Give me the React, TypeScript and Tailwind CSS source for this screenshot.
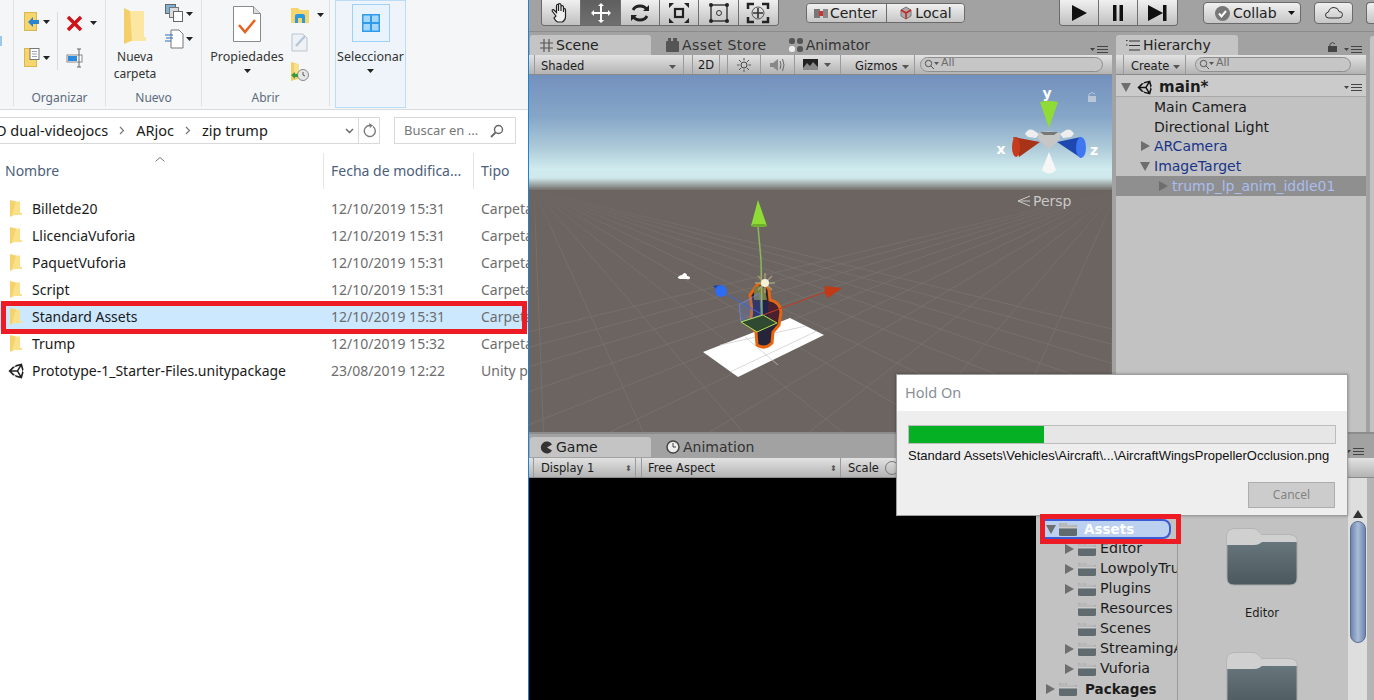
import React from "react";
import { FaUnity } from "react-icons/fa";

const seg = "font-['Noto_Sans','Open_Sans',sans-serif]";
const dj = "font-['DejaVu_Sans',sans-serif]";

const Caret = ({ c = "#222" }: { c?: string }) => (
  <svg width="7" height="4" viewBox="0 0 7 4" className="shrink-0"><path d="M0 0h7L3.5 4z" fill={c} /></svg>
);
const Arrow = ({ open }: { open?: boolean }) => (
  <svg width="10" height="10" viewBox="0 0 10 10" className="shrink-0">
    {open ? <path d="M0 1h10L5 10z" fill="#6e6e6e" /> : <path d="M1 0l9 5-9 5z" fill="#6e6e6e" />}
  </svg>
);
const MenuIcon = () => (
  <svg width="20" height="7" viewBox="0 0 20 7"><path d="M0 2h5L2.5 5z" fill="#444" /><path d="M7 0.5h11M7 3.5h11M7 6.5h11" stroke="#444" strokeWidth="1.2" /></svg>
);
const WinFolder = () => (
  <svg width="13" height="19" viewBox="0 0 13 19" className="shrink-0">
    <path d="M1 1l6 1.5V15L1 18z" fill="#f5d36c" />
    <path d="M7 2.500h4V14h2v2H3z" fill="#fbe08a" />
  </svg>
);
const TreeFolder = () => (
  <svg width="18" height="15" viewBox="0 0 18 15" className="shrink-0">
    <path d="M0 3q0-2 2-2h5l1 2h8q2 0 2 2v8q0 1-2 1H2q-2 0-2-1z" fill="#5f6b6f" />
    <path d="M0 3q0-2 2-2h5l1 2h8q2 0 2 2v1H0z" fill="#b9b9b9" />
    <path d="M0 6h18" stroke="#eee" strokeWidth="0.7" />
  </svg>
);
const BigFolder = () => (
  <svg width="72" height="58" viewBox="0 0 72 58" className="shrink-0">
    <defs>
      <linearGradient id="bf" x1="0" y1="0" x2="0" y2="1"><stop offset="0" stopColor="#6f7f85" /><stop offset="1" stopColor="#4b585d" /></linearGradient>
    </defs>
    <path d="M1 8q0-7 7-7h20q3 0 5 3l3 3h28q7 0 7 7v36q0 7-7 7H8q-7 0-7-7z" fill="url(#bf)" stroke="#a8a8a8" />
    <path d="M1 8q0-7 7-7h20q3 0 5 3l3 3h28q7 0 7 7H36l-3 2q-2 1-5 1H1z" fill="#d0d0d0" />
  </svg>
);

const Gradient = "bg-[linear-gradient(#e2e2e2,#b3b3b3)]";

const ToolBtn = ({ active, children, w = "w-[40px]" }: { active?: boolean; children: React.ReactNode; w?: string }) => (
  <div className={`${w} h-full flex items-center justify-center border-r border-[#6f6f6f] last:border-r-0 ${active ? "bg-[linear-gradient(#5f5f5f,#6f6f6f)]" : "bg-[linear-gradient(#f0f0f0,#c0c0c0)]"}`}>
    {children}
  </div>
);

const Tool = ({ children, w = 24, h = 22 }: { children: React.ReactNode; w?: number; h?: number }) => (
  <svg width={w} height={h} viewBox="0 0 24 22" fill="none">{children}</svg>
);

const SearchField = ({ w }: { w: string }) => (
  <div className={`${w} h-[15px] rounded-full border border-[#8f8f8f] bg-[#c6c6c6] flex items-center pl-[3px] gap-[1px] text-[11px] text-[#6c6c6c]`}>
    <svg width="16" height="11" viewBox="0 0 16 11" fill="none"><circle cx="4.500" cy="4.500" r="3.200" stroke="#555" /><path d="M7 7l3 3" stroke="#555" /><path d="M10 3h5l-2.500 3z" fill="#555" /></svg>
    <span className="-mt-[2px]">All</span>
  </div>
);

const Sep = () => <div className="w-px h-full bg-[#9a9a9a] shrink-0" />;

const explorerRows = [
  { n: "Billetde20", d: "12/10/2019 15:31", t: "Carpeta" },
  { n: "LlicenciaVuforia", d: "12/10/2019 15:31", t: "Carpeta" },
  { n: "PaquetVuforia", d: "12/10/2019 15:31", t: "Carpeta" },
  { n: "Script", d: "12/10/2019 15:31", t: "Carpeta" },
  { n: "Standard Assets", d: "12/10/2019 15:31", t: "Carpeta", sel: true },
  { n: "Trump", d: "12/10/2019 15:32", t: "Carpeta" },
  { n: "Prototype-1_Starter-Files.unitypackage", d: "23/08/2019 12:22", t: "Unity p", unity: true },
];

function Ribbon() {
  return (
    <div className={`h-[110px] bg-[#f5f6f7] border-b border-[#dadbdc] flex text-[12px] text-[#3b3b3b] shrink-0 ${seg}`}>
      <div className="w-[14px] h-[106px] border-r border-[#dfe0e1] pt-[36px]"><div className="w-[2px] h-[10px] bg-[#9cc8ee]" /></div>
      {/* Organizar */}
      <div className="w-[92px] h-[106px] border-r border-[#dfe0e1] flex flex-col items-center">
        <div className="flex-1 flex pt-[12px] pl-[10px] w-full">
          <div className="w-[34px] flex flex-col gap-[16px] border-r border-[#dcdcdc] h-[58px]">
            <div className="flex items-center gap-[3px] h-[20px]">
              <svg width="16" height="20" viewBox="0 0 16 20"><rect x="0.500" y="0.500" width="12" height="18" fill="#f6d56f" stroke="#d9b850" /><path d="M15 8H9V5l-5 5 5 5v-3h6z" fill="#2a84d2" /></svg>
              <Caret />
            </div>
            <div className="flex items-center gap-[3px] h-[20px]">
              <svg width="16" height="20" viewBox="0 0 16 20"><rect x="0.500" y="0.500" width="12" height="18" fill="#f6d56f" stroke="#d9b850" /><rect x="6" y="0.500" width="9" height="11" fill="#fff" stroke="#777" /><path d="M8 3.500h5M8 6h5M8 8.500h5" stroke="#88a" strokeWidth="0.800" /></svg>
              <Caret />
            </div>
          </div>
          <div className="flex flex-col gap-[14px] pl-[8px]">
            <div className="flex items-center gap-[7px] h-[22px]">
              <svg width="17" height="17" viewBox="0 0 17 17"><path d="M2 2l13 13M15 2L2 15" stroke="#d0121b" strokeWidth="3.500" /></svg>
              <Caret />
            </div>
            <svg width="19" height="20" viewBox="0 0 19 20" fill="none"><rect x="1" y="7" width="15" height="7" fill="#fff" stroke="#888" /><rect x="2" y="8" width="9" height="5" fill="#2a8ae0" /><path d="M13 1v18M11 1h4M11 19h4" stroke="#666" /></svg>
          </div>
        </div>
        <div className="h-[16px] leading-[16px] text-[#5b6b7d]">Organizar</div>
      </div>
      {/* Nuevo */}
      <div className="w-[96px] h-[106px] border-r border-[#dfe0e1] flex flex-col">
        <div className="flex-1 flex pl-[6px]">
          <div className="w-[46px] flex flex-col pt-[8px] items-center">
            <svg width="24" height="36" viewBox="0 0 24 36"><path d="M1 0l12 6v25L1 36z" fill="#f3cf6a" /><path d="M7 3h14v26h2v4H9z" fill="#fbe7a1" /></svg>
            <div className="text-center leading-[17px] mt-[4px] whitespace-nowrap text-[#333]">Nueva<br />carpeta</div>
          </div>
          <div className="flex flex-col pt-[4px] gap-[6px] pl-[7px]">
            <div className="flex items-center gap-[2px]">
              <svg width="19" height="19" viewBox="0 0 19 19" fill="none"><rect x="0.500" y="0.500" width="10" height="9" fill="#7fb3d8" stroke="#666" /><rect x="4.500" y="3.500" width="9" height="10" fill="#ddd" stroke="#777" /><rect x="8.500" y="7.500" width="9" height="10" fill="#fff" stroke="#666" /></svg>
              <Caret />
            </div>
            <div className="flex items-center gap-[2px]">
              <svg width="19" height="20" viewBox="0 0 19 20" fill="none"><path d="M6 1h8l4 4v14H6z" fill="#fff" stroke="#777" /><path d="M0 6h8M1 9h7M0 12h6" stroke="#2a6fc0" /></svg>
              <Caret />
            </div>
          </div>
        </div>
        <div className="h-[16px] leading-[16px] text-center text-[#5b6b7d]">Nuevo</div>
      </div>
      {/* Abrir */}
      <div className="w-[128px] h-[106px] border-r border-[#dfe0e1] flex flex-col">
        <div className="flex-1 flex pl-[7px]">
          <div className="w-[76px] flex flex-col items-center pt-[6px]">
            <svg width="28" height="36" viewBox="0 0 28 36" fill="none"><path d="M0.500 0.500h20l7 7v28h-27z" fill="#fff" stroke="#8a8a8a" /><path d="M20.500 0.500v7h7" stroke="#8a8a8a" fill="#ddd" /><path d="M6 19l6 7 10-12" stroke="#e8611f" strokeWidth="2.500" /></svg>
            <div className="mt-[6px] text-[#333] text-[12.500px] leading-[17px]">Propiedades</div>
            <div className="mt-[4px]"><Caret /></div>
          </div>
          <div className="flex flex-col pl-[6px] pt-[7px] gap-[10px]">
            <div className="flex items-center gap-[8px]">
              <svg width="18" height="16" viewBox="0 0 18 16"><path d="M0 1h7l2 2h9v13H0z" fill="#f6d56f" /><path d="M4 16V9q0-2 2-2h6q2 0 2 2v7h-3v-5H7v5z" fill="#2a9ae0" /></svg>
              <Caret />
            </div>
            <svg width="17" height="19" viewBox="0 0 17 19" fill="none"><path d="M1 1h11l4 4v13H1z" fill="#eef2f6" stroke="#b9c4cf" /><path d="M5 13l9-10" stroke="#b8c7d8" strokeWidth="2.500" /></svg>
            <svg width="18" height="19" viewBox="0 0 18 19"><path d="M0 0l7 2v15l-7 2z" fill="#f3cf6a" /><path d="M3 2h5v9H3z" fill="#fbe08a" /><circle cx="12" cy="13" r="5.500" fill="#e6e6e6" stroke="#888" /><path d="M12 10v3l2 1" stroke="#555" fill="none" /><path d="M0 13l4-3v2h3v3H4v2z" fill="#3c9a3c" /></svg>
          </div>
        </div>
        <div className="h-[16px] leading-[16px] text-center text-[#5b6b7d]">Abrir</div>
      </div>
      <div className="w-[5px]" />
      {/* Seleccionar */}
      <div className="w-[71px] h-[108px] bg-[#eef4f9] border border-[#bbdcf7] flex flex-col items-center pt-[3px]">
        <div className="w-[38px] h-[38px] border border-[#9fd0f5] bg-[#e8f3fb] flex items-center justify-center">
          <svg width="18" height="18" viewBox="0 0 18 18"><rect width="18" height="18" fill="#2f9bea" /><path d="M1.500 1.500H8V8H1.500zM10 1.500h6.500V8H10zM1.500 10H8v6.500H1.500zM10 10h6.500v6.500H10z" fill="#a5d7fb" /></svg>
        </div>
        <div className="mt-[6px] text-[#333] text-[12.500px] leading-[17px] whitespace-nowrap">Seleccionar</div>
        <div className="mt-[4px]"><Caret /></div>
      </div>
    </div>
  );
}

const Chevron = () => (
  <svg width="6" height="9" viewBox="0 0 6 9" className="mx-[11px] shrink-0" fill="none"><path d="M1 1l3.500 3.500L1 8" stroke="#777" strokeWidth="1.200" /></svg>
);

function Explorer() {
  return (
    <div className={`w-[529px] h-full bg-white border-r border-[#1883d7] flex flex-col shrink-0 overflow-hidden ${seg}`}>
      <Ribbon />
      <div className="h-[40px] flex items-start pt-[7px] shrink-0 text-[14.500px] text-[#1a1a1a]">
        <div className="w-[380px] h-[27px] border border-l-0 border-[#d9d9d9] flex items-center overflow-hidden">
          <div className="w-[350px] flex items-center overflow-hidden whitespace-nowrap">
            <span className="-ml-[4px]">D dual-videojocs</span>
            <Chevron />
            <span>ARjoc</span>
            <Chevron />
            <span>zip trump</span>
          </div>
          <svg width="9" height="6" viewBox="0 0 9 6" fill="none" className="ml-[-5px] mr-[4px] shrink-0"><path d="M1 1l3.500 3.500L8 1" stroke="#666" strokeWidth="1.400" /></svg>
          <div className="w-px h-full bg-[#d9d9d9]" />
          <svg width="14" height="15" viewBox="0 0 14 15" fill="none" className="ml-[4px] shrink-0"><path d="M10 3.500a5.500 5.500 0 1 1-3-1" stroke="#7a7a7a" strokeWidth="1.400" /><path d="M6 0l4 2.500L7 5z" fill="#7a7a7a" /></svg>
        </div>
        <div className="ml-[14px] w-[122px] h-[27px] border border-[#d9d9d9] flex items-center pl-[9px] justify-between pr-[11px] text-[#777] text-[13px]">
          <span>Buscar en ...</span>
          <svg width="14" height="14" viewBox="0 0 14 14" fill="none"><circle cx="8.500" cy="5.500" r="4" stroke="#666" strokeWidth="1.400" /><path d="M5.500 8.500L1 13" stroke="#666" strokeWidth="1.800" /></svg>
        </div>
      </div>
      <div className="h-[36px] flex items-stretch text-[14px] text-[#4c607a] shrink-0 mt-[3px]">
        <div className="relative w-[324px] border-r border-[#e5e5e5] pl-[5px] pb-[2px] flex items-center">
          Nombre
          <svg width="10" height="5" viewBox="0 0 10 5" fill="none" className="absolute left-[155px] top-[4px]"><path d="M0.500 4.500L5 0.500l4.500 4" stroke="#777" /></svg>
        </div>
        <div className="w-[150px] border-r border-[#e5e5e5] pl-[7px] pb-[2px] flex items-center whitespace-nowrap overflow-hidden">Fecha de modifica...</div>
        <div className="pl-[7px] pb-[2px] flex items-center">Tipo</div>
      </div>
      <div className="pt-[6px] text-[14px]">
        {explorerRows.map((r) => (
          <div key={r.n} className={`h-[27px] flex items-center whitespace-nowrap overflow-hidden ${r.sel ? "bg-[#cce8ff]" : ""}`}>
            <div className="w-[331px] flex items-center shrink-0">
              <div className="w-[32px] flex shrink-0 pl-[8px]">
                {r.unity ? <FaUnity className="text-[#222] text-[18px] shrink-0" /> : <span className="pl-[1px]"><WinFolder /></span>}
              </div>
              <span className="text-[#1a1a1a]">{r.n}</span>
            </div>
            <div className="w-[150px] shrink-0 text-[#6d6d6d]">{r.d}</div>
            <div className="text-[#6d6d6d]">{r.t}</div>
          </div>
        ))}
      </div>
    </div>
  );
}

function TopBar() {
  return (
    <div className={`h-[32px] shrink-0 border-b border-[#8c8c8c] flex text-[#222] ${dj} text-[13px]`}>
      <div className="ml-[12px] w-[238px] h-[26px] rounded-b-[4px] border border-t-0 border-[#6a6a6a] flex overflow-hidden">
        <ToolBtn>
          <Tool><path d="M7 14L3.500 9.500q-1-2 1-2l3 3V4q0-2 2-1.500V9 2q2-1 2.500 1v6-5q2-1 2.500 1v5-3q2-1 2 1v7q0 3-3 5h-5q-2-1-3.500-4z" stroke="#222" fill="#efefef" strokeWidth="1.200" /></Tool>
        </ToolBtn>
        <ToolBtn active>
          <Tool><path d="M12 1l3 3h-2v6h6V8l3 3-3 3v-2h-6v6h2l-3 3-3-3h2v-6H5v2l-3-3 3-3v2h6V4H9z" fill="#fff" /></Tool>
        </ToolBtn>
        <ToolBtn>
          <Tool><path d="M19 8q-2-4-7-4t-7 4M5 14q2 4 7 4t7-4" stroke="#222" strokeWidth="2.800" /><path d="M21 3v6h-6zM3 19v-6h6z" fill="#222" /></Tool>
        </ToolBtn>
        <ToolBtn>
          <Tool><rect x="8" y="7" width="8" height="8" stroke="#222" strokeWidth="2.200" /><path d="M2 1h5L2 6zM22 1h-5l5 5zM2 21h5l-5-5zM22 21h-5l5-5z" fill="#222" /></Tool>
        </ToolBtn>
        <ToolBtn>
          <Tool><rect x="4" y="3" width="16" height="16" stroke="#333" strokeWidth="1.400" /><circle cx="12" cy="11" r="2.500" stroke="#333" /><circle cx="4" cy="3" r="2" fill="#222" /><circle cx="20" cy="3" r="2" fill="#222" /><circle cx="4" cy="19" r="2" fill="#222" /><circle cx="20" cy="19" r="2" fill="#222" /></Tool>
        </ToolBtn>
        <ToolBtn>
          <Tool><path d="M2 7V2h6M16 2h6v5M22 15v5h-6M8 20H2v-5" stroke="#222" strokeWidth="2.500" /><path d="M12 6v10M7 11h10" stroke="#333" strokeWidth="1.600" /><circle cx="12" cy="11" r="6" stroke="#555" /></Tool>
        </ToolBtn>
      </div>
      <div className="ml-[27px] mt-[3px] w-[159px] h-[20px] rounded-[4px] border border-[#6a6a6a] flex overflow-hidden text-[14px]">
        <div className="w-[80px] border-r border-[#6a6a6a] bg-[linear-gradient(#f0f0f0,#c6c6c6)] flex items-center justify-center gap-[2px] pr-[2px]">
          <svg width="14" height="9" viewBox="0 0 14 9"><rect width="6" height="9" fill="#777" /><rect x="5" y="2" width="4" height="5" fill="#c33" /><rect x="9" width="5" height="9" fill="#888" /></svg>
          <span>Center</span>
        </div>
        <div className="flex-1 bg-[linear-gradient(#f0f0f0,#c6c6c6)] flex items-center justify-center gap-[2px]">
          <svg width="14" height="14" viewBox="0 0 14 14"><path d="M7 1l5 3v6l-5 3-5-3V4z" fill="#aaa" stroke="#777" /><path d="M7 7v6M7 7L2 4M7 7l5-3" stroke="#c22" strokeWidth="1.500" /></svg>
          <span>Local</span>
        </div>
      </div>
      <div className="ml-[94px] w-[119px] h-[26px] rounded-b-[4px] border border-t-0 border-[#6a6a6a] flex overflow-hidden">
        <ToolBtn><svg width="16" height="16" viewBox="0 0 16 16"><path d="M1 0l15 8-15 8z" fill="#111" /></svg></ToolBtn>
        <ToolBtn><svg width="12" height="16" viewBox="0 0 12 16"><path d="M1 0h3.500v16H1zM7.500 0H11v16H7.500z" fill="#111" /></svg></ToolBtn>
        <ToolBtn><svg width="19" height="16" viewBox="0 0 19 16"><path d="M0 0l15 8-15 8zM15 0h3.500v16H15z" fill="#111" /></svg></ToolBtn>
      </div>
      <div className="ml-[25px] mt-[2px] w-[98px] h-[22px] rounded-[4px] border border-[#6a6a6a] bg-[linear-gradient(#f0f0f0,#c6c6c6)] flex items-center pl-[11px] gap-[3px] text-[14px]">
        <svg width="15" height="15" viewBox="0 0 15 15"><circle cx="7.500" cy="7.500" r="7.500" fill="#777" /><path d="M4 7.500l2.500 3L11 5" stroke="#fff" strokeWidth="2" fill="none" /></svg>
        <span>Collab</span>
        <span className="ml-[8px]"><Caret c="#111" /></span>
      </div>
      <div className="ml-[13px] mt-[2px] w-[39px] h-[22px] rounded-[4px] border border-[#6a6a6a] bg-[linear-gradient(#f0f0f0,#c6c6c6)] flex items-center justify-center">
        <svg width="18" height="12" viewBox="0 0 18 12" fill="none"><path d="M4 11q-3.500 0-3.500-3Q.5 5.500 3.500 5q1-4.500 5.500-4.500Q13 .5 14 4.500q3.500 0 3.500 3.200 0 3.300-3.500 3.300z" stroke="#333" /></svg>
      </div>
      <div className="ml-[13px] mt-[2px] flex-1 h-[22px] rounded-l-[4px] border border-r-0 border-[#6a6a6a] bg-[linear-gradient(#f0f0f0,#c6c6c6)]" />
    </div>
  );
}

function Tab({ icon, label, active, w }: { icon: React.ReactNode; label: string; active?: boolean; w?: string }) {
  return (
    <div className={`h-[20px] flex items-center gap-[3px] text-[14px] whitespace-nowrap ${active ? `${w} bg-[#c4c4c4] rounded-t-[3px] text-[#222] pl-[10px]` : "text-[#333]"}`}>
      {icon}<span>{label}</span>
    </div>
  );
}

function SceneView() {
  const a = [534, 190];
  const b = [1118, 190];
  const lines: number[] = [];
  for (let i = -6; i <= 12; i++) lines.push(i * 210);
  return (
    <svg viewBox="529 75 583 357" className="flex-1 w-full block min-h-0" preserveAspectRatio="none">
      <defs>
        <linearGradient id="sky" x1="0" y1="0" x2="0" y2="1">
          <stop offset="0" stopColor="#7391bd" />
          <stop offset="0.4" stopColor="#86a6c8" />
          <stop offset="0.7" stopColor="#aecbd9" />
          <stop offset="0.9" stopColor="#d0ecef" />
          <stop offset="1" stopColor="#cfe7e9" />
        </linearGradient>
        <linearGradient id="fade" x1="0" y1="0" x2="0" y2="1">
          <stop offset="0" stopColor="#6b6460" stopOpacity="1" />
          <stop offset="1" stopColor="#6b6460" stopOpacity="0" />
        </linearGradient>
        <linearGradient id="hor" x1="0" y1="0" x2="0" y2="1">
          <stop offset="0" stopColor="#cfe7e9" />
          <stop offset="1" stopColor="#6b6460" />
        </linearGradient>
      </defs>
      <rect x="529" y="75" width="583" height="105" fill="url(#sky)" />
      <rect x="529" y="178" width="583" height="13" fill="url(#hor)" />
      <rect x="529" y="190" width="583" height="242" fill="#6b6460" />
      <g stroke="#8a8582" strokeWidth="0.800" opacity="0.450">
        {lines.map((t) => <line key={`a${t}`} x1={a[0]} y1={a[1]} x2={a[0] + t - 400} y2={700} />)}
        {lines.map((t) => <line key={`b${t}`} x1={b[0]} y1={b[1]} x2={b[0] - t + 400} y2={700} />)}
      </g>
      <rect x="529" y="190" width="583" height="50" fill="url(#fade)" />
      {/* plane */}
      <path d="M703 352L790 318 824 335 738 377z" fill="#fff" />
      <path d="M720 345L806 326M730 372L817 331M745 337L778 365" stroke="#c8c8c8" strokeWidth="0.700" />
      {/* cloud */}
      <path d="M678 277q2-2 4-2l2-2q3 0 3 3 3 0 3 2t-4 1h-6q-3-1-2-2z" fill="#fff" />
      {/* character */}
      <path d="M757 285Q765 280 769 290L770 300Q780 302 781 312L779 325 773 332 772 343Q765 350 757 345L756 332 750 325 752 310 750 295z" fill="#26243a" stroke="#e8640f" strokeWidth="3" />
      <path d="M754 288q6-5 11 1l2 11h-13z" fill="#7c7a44" />
      <path d="M768 302q10 2 11 10l-2 11-9-3z" fill="#4a2030" />
      <path d="M753 302h15v18h-15z" fill="#20244e" />
      {/* handles */}
      <path d="M739 305L760 293 761 315 741 322z" fill="#5b78d0" fillOpacity="0.250" stroke="#6a8ae0" strokeWidth="0.800" />
      <path d="M741 322L763 315 777 323 757 332z" fill="#2f4a30" stroke="#b5e04a" />
      <line x1="763" y1="315" x2="721" y2="291" stroke="#3f66e0" strokeWidth="1" />
      <line x1="763" y1="315" x2="825" y2="292" stroke="#c63a1e" strokeWidth="1" />
      <path d="M758 226L761 260 762 315" fill="none" stroke="#8eb85a" strokeWidth="1.500" />
      <path d="M758 200L751 226Q759 228 767 226z" fill="#8fdc36" />
      <path d="M751 226Q759 228 767 226L765 224H753z" fill="#6fae2c" />
      <path d="M713 286l8-1-1 8z" fill="#1f3fa8" />
      <circle cx="721" cy="291" r="6" fill="#2d6bf2" />
      <path d="M842 288L825 286Q823 293 828 298z" fill="#c03a18" />
      {/* sun */}
      <g stroke="#a89a78" strokeWidth="1.500">
        <path d="M765 273v20M755 283h20M758 276l14 14M772 276l-14 14" />
      </g>
      <circle cx="765" cy="283" r="4" fill="#f4f0d8" />
      {/* axis gizmo */}
      <text x="1047" y="98" fill="#fff" fontSize="14" fontWeight="700" textAnchor="middle" fontFamily="DejaVu Sans">y</text>
      <text x="1001" y="154" fill="#fff" fontSize="14" fontWeight="700" textAnchor="middle" fontFamily="DejaVu Sans">x</text>
      <text x="1094" y="155" fill="#fff" fontSize="14" fontWeight="700" textAnchor="middle" fontFamily="DejaVu Sans">z</text>
      <path d="M1025 134q3-6 8-4l6 4-3 4-8-1z" fill="#eee" />
      <path d="M1074 134q-3-6-8-4l-6 4 3 4 8-1z" fill="#eee" />
      <path d="M1038 133l10-2 12 2v6l-11 11-11-11z" fill="#c6c6c6" />
      <path d="M1040 132h18l-4 3h-10z" fill="#777" />
      <path d="M1049 128L1040 102Q1049 100 1058 102z" fill="#8fdc36" />
      <path d="M1040 142L1013 137 1019 157z" fill="#a83418" />
      <ellipse cx="1016" cy="147" rx="4" ry="10" fill="#c63a1e" />
      <path d="M1057 142L1081 137 1081 158z" fill="#1f47b0" />
      <ellipse cx="1081" cy="147.500" rx="5" ry="10.500" fill="#3f76f2" />
      <path d="M1049 152L1042 170Q1049 177 1056 170z" fill="#f6f6f6" />
      <rect x="1088" y="96" width="8" height="6" fill="#b9c6d8" />
      <path d="M1089 96v-2q3-3 6 0" stroke="#b9c6d8" fill="none" />
      <path d="M1030 196l-12 5 12 5M1018 201h12" stroke="#c9c9c9" fill="none" />
      <text x="1033" y="206" fill="#c9c9c9" fontSize="14" fontFamily="DejaVu Sans">Persp</text>
    </svg>
  );
}

function SceneColumn() {
  return (
    <div className="w-[583px] flex flex-col shrink-0">
      <div className="h-[20px] flex items-center shrink-0 relative">
        <Tab active w="w-[121px] ml-[1px]" label="Scene" icon={<svg width="13" height="13" viewBox="0 0 13 13" fill="none"><path d="M4 0v13M9 0v13M0 4h13M0 9h13" stroke="#555" strokeWidth="1.200" /></svg>} />
        <div className="ml-[15px] tracking-[0.45px]"><Tab label="Asset Store" icon={<svg width="13" height="14" viewBox="0 0 13 14"><rect y="3" width="13" height="11" rx="1" fill="#555" /><rect x="2" width="3" height="4" fill="#555" /><rect x="7" width="4" height="4" fill="#555" /></svg>} /></div>
        <div className="ml-[22px]"><Tab label="Animator" icon={<svg width="14" height="14" viewBox="0 0 14 14"><rect width="6" height="6" rx="2.500" fill="#555" /><rect x="8" width="6" height="6" rx="2.500" fill="#555" /><rect y="8" width="6" height="6" rx="2.500" fill="#eee" /><rect x="8" y="8" width="6" height="6" rx="2.500" fill="#555" /></svg>} /></div>
        <div className="absolute right-[2px] top-[11px]"><MenuIcon /></div>
      </div>
      <div className={`h-[20px] shrink-0 ${Gradient} flex items-center text-[11.500px] text-[#1c1c1c] border-b border-[#8a8a8a]`}>
        <div className="w-[5px] shrink-0" /><Sep />
        <div className="w-[148px] pl-[6px] pr-[7px] pt-[4px] flex items-center justify-between shrink-0"><span>Shaded</span><Caret c="#555" /></div>
        <Sep />
        <div className="w-[8px]" />
        <div className="w-[28px] border-x border-[#9a9a9a] h-full pt-[2px] flex items-center justify-center shrink-0">2D</div>
        <div className="w-[7px]" />
        <Sep />
        <div className="w-[32px] flex justify-center shrink-0"><svg width="14" height="14" viewBox="0 0 14 14" fill="none"><circle cx="7" cy="7" r="3" stroke="#444" /><path d="M7 0v2.500M7 11.500V14M0 7h2.500M11.500 7H14M2 2l2 2M10 10l2 2M12 2l-2 2M4 10l-2 2" stroke="#555" /></svg></div>
        <Sep />
        <div className="w-[33px] flex justify-center shrink-0"><svg width="16" height="14" viewBox="0 0 16 14" fill="none"><path d="M0 5h3l5-4v12l-5-4H0z" fill="#888" /><path d="M10 3q2 4 0 8M12.500 1q3 6 0 12" stroke="#666" /></svg></div>
        <Sep />
        <div className="w-[45px] flex items-center shrink-0 pl-[8px] gap-[6px]"><svg width="15" height="11" viewBox="0 0 15 11"><rect width="15" height="11" fill="#222" /><path d="M0 9l4-5 3 3 3-4 5 5v3H0z" fill="#888" /></svg><Caret c="#555" /></div>
        <Sep />
        <div className="w-[7px]" />
        <div className="w-[66px] pl-[7px] pt-[4px] flex items-center gap-[5px] shrink-0"><span>Gizmos</span><Caret c="#555" /></div>
        <Sep />
        <div className="ml-[5px]"><SearchField w="w-[183px]" /></div>
      </div>
      <SceneView />
    </div>
  );
}

function HierarchyColumn() {
  const row = "h-[20px] flex items-center whitespace-nowrap";
  return (
    <div className={`w-[250px] ml-[4px] flex flex-col shrink-0 ${dj}`}>
      <div className="h-[20px] flex items-center shrink-0 relative">
        <Tab active w="w-[122px]" label="Hierarchy" icon={<svg width="14" height="11" viewBox="0 0 14 11" fill="none"><path d="M3 1h11M3 5.500h11M3 10h11" stroke="#333" /><path d="M0 .5h1.500M0 5h1.500" stroke="#333" /></svg>} />
        <div className="absolute right-[2px] top-[11px]"><MenuIcon /></div>
        <svg width="10" height="11" viewBox="0 0 10 11" className="absolute right-[28px] top-[6px]" fill="none"><rect y="5" width="9" height="6" fill="#444" /><path d="M2 5V3q2.500-3 5 0" stroke="#444" /></svg>
      </div>
      <div className={`h-[20px] shrink-0 ${Gradient} flex items-center text-[11.500px] text-[#1c1c1c] border-b border-[#8a8a8a]`}>
        <div className="w-[7px]" /><Sep />
        <div className="w-[61px] pl-[7px] pt-[4px] flex items-center gap-[4px] shrink-0"><span>Create</span><Caret c="#555" /></div>
        <Sep />
        <div className="ml-[9px]"><SearchField w="w-[156px]" /></div>
      </div>
      <div className="flex-1 bg-[#c2c2c2] text-[14px] text-[#1c1c1c]">
        <div className="h-[22px] bg-[#cbcbcb] border-b border-[#a8a8a8] flex items-center pl-[5px] pr-[2px] pt-[3px]">
          <Arrow open />
          <FaUnity className="ml-[6px] text-[#111] text-[17px]" />
          <span className="ml-[5px] font-bold text-[15px]">main*</span>
          <div className="ml-auto"><MenuIcon /></div>
        </div>
        <div>
          <div className={`${row} pl-[38px]`}>Main Camera</div>
          <div className={`${row} pl-[38px]`}>Directional Light</div>
          <div className={`${row} pl-[24px] gap-[4px] -mt-[1px] text-[#18358a]`}><Arrow />ARCamera</div>
          <div className={`${row} pl-[24px] gap-[4px] text-[#18358a]`}><Arrow open />ImageTarget</div>
          <div className={`${row} pl-[42px] gap-[4px] bg-[#8f8f8f] text-[#a9bdf0]`}><Arrow />trump_lp_anim_iddle01</div>
        </div>
      </div>
    </div>
  );
}

function ProjectPanel() {
  const items = [
    { n: "Editor", a: true },
    { n: "LowpolyTrump", a: true },
    { n: "Plugins", a: true },
    { n: "Resources" },
    { n: "Scenes" },
    { n: "StreamingAssets", a: true },
    { n: "Vuforia", a: true },
  ];
  return (
    <div className={`flex-1 flex flex-col overflow-hidden ${dj}`}>
      <div className="h-[21px] shrink-0 flex justify-end items-end pr-[8px] pb-[3px]"><MenuIcon /></div>
      <div className={`h-[20px] shrink-0 ${Gradient} border-b border-[#8a8a8a]`} />
      <div className="flex-1 flex bg-[#c2c2c2] min-h-0">
        <div className="w-[142px] border-r border-[#9a9a9a] pl-[9px] pt-[41px] overflow-hidden text-[14.250px] text-[#1c1c1c] shrink-0">
          <div className="h-[20px] -ml-[5px] w-[131px] rounded-r-[8px] border-2 border-[#3c5cd6] bg-[#bcd0f0] flex items-center pl-[4px] gap-[3px] text-white font-bold text-[13.500px]">
            <Arrow open /><TreeFolder /><span className="ml-[4px]">Assets</span>
          </div>
          {items.map((i) => (
            <div key={i.n} className="h-[20px] flex items-center whitespace-nowrap pl-[19px]">
              <div className="w-[14px] shrink-0">{i.a && <Arrow />}</div>
              <TreeFolder /><span className="ml-[4px]">{i.n}</span>
            </div>
          ))}
          <div className="h-[20px] flex items-center gap-[4px] font-bold text-[13.500px]">
            <Arrow /><TreeFolder /><span className="ml-[4px]">Packages</span>
          </div>
        </div>
        <div className="flex-1 min-w-0 flex flex-col items-center pt-[50px] pr-[2px] text-[11.500px] text-[#1c1c1c]">
          <BigFolder />
          <div className="mt-[19px] h-[16px]">Editor</div>
          <div className="mt-[31px]"><BigFolder /></div>
        </div>
        <div className="w-[19px] bg-[#dedede] shrink-0 flex flex-col items-center pt-[32px]">
          <svg width="10" height="8" viewBox="0 0 10 8"><path d="M5 0l5 8H0z" fill="#333" /></svg>
          <div className="mt-[3px] w-[16px] h-[122px] rounded-full bg-[linear-gradient(90deg,#6f86ad,#a9bcd8,#6f86ad)] border border-[#5b6f92]" />
        </div>
        <div className="w-[7px] bg-[#b4b4b4] shrink-0" />
      </div>
    </div>
  );
}

function Dialog() {
  return (
    <div className={`absolute left-[896px] top-[374px] w-[452px] h-[142px] border border-[#9e9e9e] bg-[#eeeeee] shadow-[0_0_3px_rgba(0,0,0,0.3)] ${seg}`}>
      <div className="h-[36px] bg-white flex items-center pl-[8px] text-[#8a8f96] text-[14.500px]">Hold On</div>
      <div className="mx-[11px] mt-[14px] h-[19px] border border-[#bcbcbc] bg-[#e6e6e6]">
        <div className="w-[31.800%] h-full bg-[#06b025]" />
      </div>
      <div className="ml-[11px] mt-[3px] text-[13px] leading-[17px] text-[#111] whitespace-nowrap font-['Liberation_Sans',sans-serif]">
        Standard Assets\Vehicles\Aircraft\...\AircraftWingsPropellerOcclusion.png
      </div>
      <div className="flex justify-end pr-[12px] mt-[18px]">
        <div className="w-[87px] h-[26px] bg-[#cccccc] border border-[#adadad] flex items-center justify-center text-[12px] text-[#838383]">Cancel</div>
      </div>
    </div>
  );
}

export default function App() {
  return (
    <div className="relative w-[1374px] h-[700px] flex overflow-hidden bg-[#a2a2a2]">
      <Explorer />
      <div className={`flex-1 h-full flex flex-col min-w-0 bg-[#a2a2a2] ${dj}`}>
        <TopBar />
        <div className="h-[402px] pt-[3px] flex shrink-0 border-b-2 border-[#8c8c8c]">
          <SceneColumn />
          <HierarchyColumn />
          <div className="ml-[4px] flex-1 flex flex-col pt-[1px]">
            <div className="h-[20px] bg-[#c4c4c4] rounded-tl-[3px]" />
            <div className="flex-1 bg-[#c2c2c2]" />
          </div>
        </div>
        <div className="flex-1 flex min-h-0 pt-[3px]">
          <div className="w-[507px] flex flex-col shrink-0">
            <div className="h-[21px] flex items-start shrink-0">
              <Tab active w="w-[121px] ml-[1px]" label="Game" icon={<svg width="13" height="13" viewBox="0 0 13 13"><path d="M12 3.500a6 6 0 1 0 0 6L7 6.500z" fill="#333" /></svg>} />
              <div className="ml-[15px]"><Tab label="Animation" icon={<svg width="14" height="14" viewBox="0 0 14 14" fill="none"><circle cx="7" cy="7" r="6" fill="#eee" stroke="#444" strokeWidth="1.500" /><path d="M7 3v4h3" stroke="#444" /></svg>} /></div>
            </div>
            <div className={`h-[20px] shrink-0 ${Gradient} flex items-center text-[11.500px] text-[#1c1c1c] border-b border-[#8a8a8a]`}>
              <div className="w-[4px]" /><Sep />
              <div className="w-[101px] pl-[7px] pr-[3px] pt-[2px] flex justify-between items-center shrink-0"><span>Display 1</span><span className="text-[8px] leading-[8px] text-[#555]">⬍</span></div>
              <Sep /><div className="w-[5px]" /><Sep />
              <div className="w-[198px] pl-[6px] pr-[3px] pt-[2px] flex justify-between items-center shrink-0"><span>Free Aspect</span><span className="text-[8px] leading-[8px] text-[#555]">⬍</span></div>
              <Sep />
              <span className="ml-[7px] pt-[2px]">Scale</span>
              <div className="ml-[6px] w-[14px] h-[14px] rounded-full border border-[#777]" />
            </div>
            <div className="flex-1 bg-black" />
          </div>
          <ProjectPanel />
        </div>
      </div>
      <Dialog />
      <div className="absolute left-[1px] top-[301px] w-[526px] h-[33px] border-[5px] border-[#ed1c24]" />
      <div className="absolute left-[1040px] top-[514px] w-[141px] h-[30px] border-[5px] border-[#ed1c24]" />
    </div>
  );
}
